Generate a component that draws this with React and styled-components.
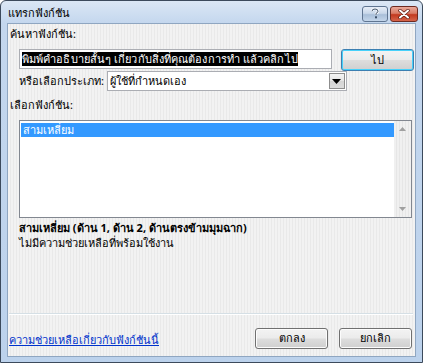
import React from 'react';
import styled, { createGlobalStyle } from 'styled-components';

const GlobalStyle = createGlobalStyle`
    html, body {
        margin: 0;
        padding: 0;
        background: #ffffff;
    }
    body {
        font-family: Tahoma, "Noto Sans", "DejaVu Sans", sans-serif;
        font-size: 11px;
        color: #000;
    }
`;

const StyledWindow = styled.div`
    width: 423px;
    height: 363px;
    box-sizing: border-box;
    border: 1px solid #3c4a5c;
    border-radius: 6px 6px 0 0;
    background: linear-gradient(to bottom, #dbe7f5 0px, #c4d7ee 22px, #bcd2ec 100%);
    display: flex;
    flex-direction: column;
    overflow: hidden;
`;

const StyledTitleBar = styled.div`
    height: 22px;
    display: flex;
    align-items: center;
    padding: 0 4px 0 7px;
`;

const StyledTitle = styled.div`
    flex: 1;
    font-size: 11px;
    color: #000;
    padding-top: 2px;
`;

const StyledCaptionButton = styled.div`
    width: ${p => p.$w}px;
    height: 16px;
    margin-left: 2px;
    box-sizing: border-box;
    border: 1px solid ${p => (p.$close ? '#6d2a20' : '#5f7591')};
    border-radius: 3px;
    display: flex;
    align-items: center;
    justify-content: center;
    margin-top: 3px;
    background: ${p => (p.$close
        ? 'linear-gradient(to bottom, #e9a99a 0%, #d97c66 45%, #c2391f 55%, #d5644a 100%)'
        : 'linear-gradient(to bottom, #e6eef8 0%, #c9d8ea 45%, #a9bfd9 55%, #c3d5ea 100%)')};
`;

const StyledBody = styled.div`
    flex: 1;
    margin: 0 6px 5px 6px;
    border: 1px solid #8fa6c1;
    background: repeating-linear-gradient(90deg, #f2f2f2 0px, #f2f2f2 2px, #e9e9e9 2px, #e9e9e9 3px);
    display: flex;
    flex-direction: column;
`;

const StyledLabel = styled.div`
    margin: ${p => p.$m || '0'};
    height: 14px;
    line-height: 14px;
    white-space: nowrap;
    font-weight: ${p => (p.$bold ? 'bold' : 'normal')};
`;

const StyledRow = styled.div`
    display: flex;
    align-items: ${p => p.$align || 'center'};
    margin: ${p => p.$m || '0'};
`;

const StyledInput = styled.div`
    width: ${p => p.$w}px;
    height: 20px;
    box-sizing: border-box;
    border: 1px solid #abadb3;
    background: #fff;
    display: flex;
    align-items: center;
    padding-left: 2px;
    position: relative;
`;

const StyledSelection = styled.span`
    background: #000;
    color: #fff;
    line-height: 14px;
    white-space: nowrap;
    letter-spacing: 0.1px;
`;

const StyledDropButton = styled.div`
    position: absolute;
    right: 1px;
    top: 1px;
    bottom: 1px;
    width: 16px;
    box-sizing: border-box;
    border: 1px solid #8d8d8d;
    background: linear-gradient(to bottom, #f4f4f4 0%, #e4e4e4 50%, #d4d4d4 51%, #dcdcdc 100%);
    display: flex;
    align-items: center;
    justify-content: center;
`;

const StyledButton = styled.div`
    width: ${p => p.$w || 73}px;
    height: ${p => p.$h || 21}px;
    box-sizing: border-box;
    border: 1px solid ${p => (p.$default ? '#3c7fb1' : '#707070')};
    border-radius: 3px;
    box-shadow: ${p => (p.$default ? 'inset 0 0 0 1px #48d1fa' : 'inset 0 0 0 1px #fcfcfc')};
    background: linear-gradient(to bottom, #f3f3f3 0%, #ebebeb 48%, #dddddd 52%, #cfcfcf 100%);
    display: flex;
    align-items: center;
    justify-content: center;
    margin-left: ${p => p.$ml || 0}px;
`;

const StyledList = styled.div`
    flex: 1;
    margin: 0 3px 0 11px;
    height: 98px;
    box-sizing: border-box;
    border: 1px solid #828790;
    background: #fff;
    display: flex;
`;

const StyledListItems = styled.div`
    flex: 1;
    padding: 2px 0 0 1px;
`;

const StyledListItem = styled.div`
    height: 14px;
    line-height: 14px;
    padding-left: 2px;
    background: ${p => (p.$selected ? '#3399ff' : 'transparent')};
    color: ${p => (p.$selected ? '#fff' : '#000')};
`;

const StyledScrollbar = styled.div`
    width: 17px;
    background: repeating-linear-gradient(90deg, #f0f0f0 0px, #f0f0f0 2px, #e6e6e6 2px, #e6e6e6 3px);
    display: flex;
    flex-direction: column;
    justify-content: space-between;
    align-items: center;
    padding: 6px 0;
    box-sizing: border-box;
`;

const StyledSeparator = styled.div`
    margin: auto 2px 0 1px;
    height: 1px;
    background: #d5dfe5;
    border-bottom: 1px solid #fff;
`;

const StyledFooter = styled.div`
    display: flex;
    align-items: center;
    padding: 12px 3px 7px 1px;
`;

const StyledLink = styled.a`
    flex: 1;
    color: #0033cc;
    text-decoration: underline;
    padding-top: 4px;
    white-space: nowrap;
`;

const Triangle = ({ up, color = '#000', size = 4 }) => (
    <svg width={size * 2 + 1} height={size + 1} viewBox={`0 0 ${size * 2 + 1} ${size + 1}`}>
        {up
            ? <polygon points={`0,${size + 1} ${size * 2 + 1},${size + 1} ${size + 0.5},0`} fill={color} />
            : <polygon points={`0,0 ${size * 2 + 1},0 ${size + 0.5},${size + 1}`} fill={color} />}
    </svg>
);

function App() {
    return (
        <>
            <GlobalStyle />
            <StyledWindow>
                <StyledTitleBar>
                    <StyledTitle>แทรกฟังก์ชัน</StyledTitle>
                    <StyledCaptionButton $w={26}>
                        <svg width="10" height="11" viewBox="0 0 10 11">
                            <path d="M2 3.2 Q2 1 5 1 Q8 1 8 3.2 Q8 4.6 6 5.4 L6 7" stroke="#fff" strokeWidth="2.2" fill="none" />
                            <path d="M2 3.2 Q2 1 5 1 Q8 1 8 3.2 Q8 4.6 6 5.4 L6 7" stroke="#3b4f68" strokeWidth="1" fill="none" />
                            <rect x="5" y="8.3" width="2" height="2" fill="#3b4f68" />
                        </svg>
                    </StyledCaptionButton>
                    <StyledCaptionButton $w={28} $close>
                        <svg width="12" height="10" viewBox="0 0 12 10">
                            <path d="M2 1.5 L10 8.5 M10 1.5 L2 8.5" stroke="#5a1a10" strokeWidth="3.4" strokeLinecap="round" />
                            <path d="M2 1.5 L10 8.5 M10 1.5 L2 8.5" stroke="#fff" strokeWidth="2" strokeLinecap="round" />
                        </svg>
                    </StyledCaptionButton>
                </StyledTitleBar>
                <StyledBody>
                    <StyledLabel $m="3px 0 0 2px">ค้นหาฟังก์ชัน:</StyledLabel>
                    <StyledRow $m="8px 0 0 11px" $align="flex-start">
                        <StyledInput $w={313}>
                            <StyledSelection>พิมพ์คำอธิบายสั้นๆ เกี่ยวกับสิ่งที่คุณต้องการทำ แล้วคลิกไป</StyledSelection>
                        </StyledInput>
                        <StyledButton $default $ml={9} $h={22}>ไป</StyledButton>
                    </StyledRow>
                    <StyledRow $m="0 0 0 11px">
                        <StyledLabel $m="0 3px 0 0">หรือเลือกประเภท:</StyledLabel>
                        <StyledInput $w={240}>
                            <span>ผู้ใช้ที่กำหนดเอง</span>
                            <StyledDropButton>
                                <Triangle />
                            </StyledDropButton>
                        </StyledInput>
                    </StyledRow>
                    <StyledLabel $m="7px 0 0 2px">เลือกฟังก์ชัน:</StyledLabel>
                    <StyledRow $m="8px 0 0 0" $align="stretch">
                        <StyledList>
                            <StyledListItems>
                                <StyledListItem $selected>สามเหลี่ยม</StyledListItem>
                            </StyledListItems>
                            <StyledScrollbar>
                                <Triangle up color="#a0a0a0" size={3} />
                                <Triangle color="#a0a0a0" size={3} />
                            </StyledScrollbar>
                        </StyledList>
                    </StyledRow>
                    <StyledLabel $m="3px 0 0 11px" $bold>สามเหลี่ยม (ด้าน 1, ด้าน 2, ด้านตรงข้ามมุมฉาก)</StyledLabel>
                    <StyledLabel $m="1px 0 0 11px">ไม่มีความช่วยเหลือที่พร้อมใช้งาน</StyledLabel>
                    <StyledSeparator />
                    <StyledFooter>
                        <StyledLink href="#">ความช่วยเหลือเกี่ยวกับฟังก์ชันนี้</StyledLink>
                        <StyledButton>ตกลง</StyledButton>
                        <StyledButton $ml={11}>ยกเลิก</StyledButton>
                    </StyledFooter>
                </StyledBody>
            </StyledWindow>
        </>
    );
}

export default App;
